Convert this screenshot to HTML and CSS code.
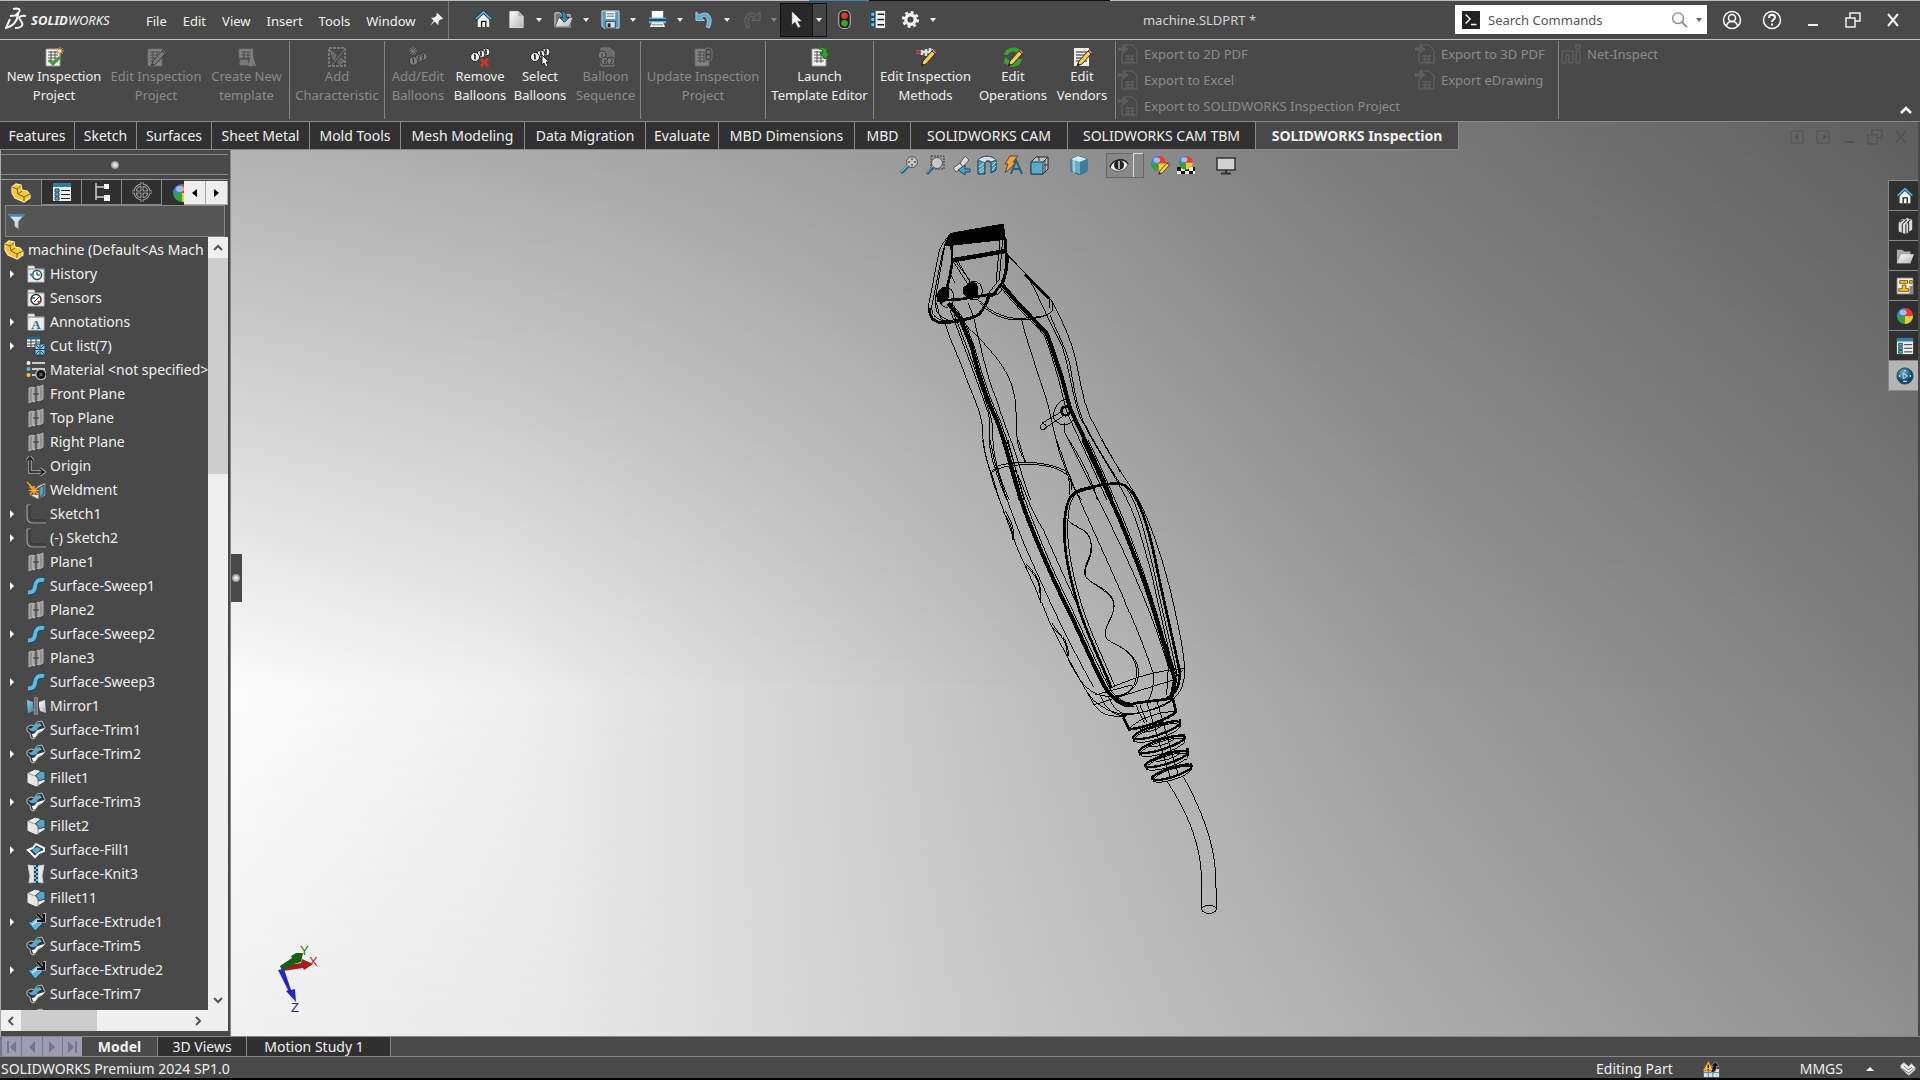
FILE: index.html
```html
<!DOCTYPE html>
<html lang="en">
<head>
<meta charset="utf-8">
<title>machine.SLDPRT</title>
<link rel="stylesheet" href="styles.css">
</head>
<body>
<svg class="sprite" aria-hidden="true">
<defs>
<linearGradient id="metal" x2="1" y2="1"><stop stop-color="#fff"/><stop offset="1" stop-color="#b4b4b4"/></linearGradient>
<linearGradient id="aqua" x2="1" y2="1"><stop stop-color="#9bd4ec"/><stop offset="1" stop-color="#2f7fa5"/></linearGradient>
<radialGradient id="ink" cx=".4" cy=".3"><stop stop-color="#6fb2d6"/><stop offset="1" stop-color="#12486c"/></radialGradient>
</defs>
<symbol id="home" viewBox="0 0 20 20"><path d="M4 9.500V18h12V9.500L10 4z" fill="#f4f4f4"/><path d="M8 18v-6h4.500v6" fill="none" stroke="#222" stroke-width="1.500"/><path d="M1 10.500 10 2l9 8.500" fill="none" stroke="#174a66" stroke-width="3.500"/><path d="M2 9.500 10 2l8 7.500" fill="none" stroke="#6db6d8" stroke-width="1.500"/></symbol>
<symbol id="doc" viewBox="0 0 20 20"><path d="M3 1.500h9l5 5v12H3z" fill="url(#metal)" stroke="#ddd"/><path d="M12 1.500v5h5" fill="#aaa"/></symbol>
<symbol id="open" viewBox="0 0 20 20"><path d="M1 3h5l2 2h9v13H1z" fill="#777" stroke="#ddd"/><path d="M5 8h15l-4 10H1z" fill="url(#metal)" stroke="#555"/><path d="M7 1c5 0 6 3 6 7h3l-5 5-5-5h3c0-3 0-5-2-7z" fill="#3e86ab" stroke="#123d55"/></symbol>
<symbol id="save" viewBox="0 0 20 20"><path d="M1 1h18v18H3l-2-2z" fill="#4e9dc4" stroke="#c9e0eb"/><path d="M5 1.500h10v8H5z" fill="#f4f4f4"/><path d="M6 4h8M6 6.500h8" stroke="#666"/><path d="M5 12h10v7H5z" fill="#ddd" stroke="#245"/><path d="M7 14h3v4H7z" fill="#222"/></symbol>
<symbol id="print" viewBox="0 0 20 20"><path d="M4 1h12v8H4z" fill="#fff"/><path d="M1 8h18v6H1z" fill="#62adcf"/><path d="M1 10.500h18" stroke="#174a66" stroke-width="2"/><path d="M4 13h12l2 5H2z" fill="#eee"/><path d="M4 15.500h12" stroke="#888"/></symbol>
<symbol id="undo" viewBox="0 0 20 20"><path d="M1 2v9h9L6.500 8C11 5 15 8 12 18l3 1C20 9 15-1 4.500 5z" fill="#5fabd0" stroke="#bfe2f2" stroke-width=".8"/></symbol>
<symbol id="redo" viewBox="0 0 20 20"><path d="M19 2v9h-9l3.500-3C9 5 5 8 8 18l-3 1C0 9 5-1 15.500 5z" fill="#505050" stroke="#6a6a6a"/></symbol>
<symbol id="cursor" viewBox="0 0 20 20"><path d="M5 1v15l3.500-3 3 6 3-1.500-3-5.500H16z" fill="#fff" stroke="#222" stroke-width=".7"/></symbol>
<symbol id="traffic" viewBox="0 0 20 20"><rect x="4" y=".5" width="12" height="19" rx="5" fill="#1d1d1d" stroke="#ccc"/><circle cx="10" cy="6" r="3.500" fill="#e23a22"/><circle cx="10" cy="14" r="3.500" fill="#3aa52e"/></symbol>
<symbol id="list" viewBox="0 0 20 20"><path d="M2 1h16v18H2z" fill="#f0f0f0"/><path d="M2 1h6v18H2z" fill="#1f4960"/><path d="M3.500 3h3v3h-3zM3.500 8.500h3v3h-3zM3.500 14h3v3h-3z" fill="#7ec0dd"/><path d="M10 4.500h7M10 10h7M10 15.500h7" stroke="#222" stroke-width="1.500"/></symbol>
<symbol id="gear" viewBox="0 0 20 20"><circle cx="10" cy="10" r="5" fill="none" stroke="#f5f5f5" stroke-width="3.500"/><circle cx="10" cy="10" r="7.500" fill="none" stroke="#f5f5f5" stroke-width="3" stroke-dasharray="2.950 2.940"/></symbol>
<symbol id="pin" viewBox="0 0 16 16"><path d="m9 1 6 6-2 1-1 0-2 3v3l-4-4-5 5 4-6-3-3h3l3-2V2z" fill="#f5f5f5"/></symbol>
<symbol id="search" viewBox="0 0 20 20"><circle cx="9" cy="8" r="6" fill="none" stroke="#888" stroke-width="1.500"/><path d="m13 12 6 6" stroke="#888" stroke-width="2"/></symbol>
<symbol id="user" viewBox="0 0 20 20"><g fill="none" stroke="#fff" stroke-width="1.500"><circle cx="10" cy="10" r="8.500"/><circle cx="10" cy="8" r="3.500"/><path d="M4.500 16c1-6 10-6 11 0"/></g></symbol>
<symbol id="help" viewBox="0 0 20 20"><circle cx="10" cy="10" r="8.500" fill="none" stroke="#fff" stroke-width="1.500"/><path d="M7 8c0-4.500 6-4 6-.5 0 2-3 2-3 4.500" fill="none" stroke="#fff" stroke-width="2"/><path d="M9 13.500h2v2H9z" fill="#fff"/></symbol>
<symbol id="sheet" viewBox="0 0 20 20"><path d="M2 2h14v17H2z" fill="#f4f4f4" stroke="#999"/><path d="M4 5h10M4 8h10M4 11h10M4 14h10M7 4v12M11 4v12" stroke="#555"/></symbol>
<symbol id="pencil" viewBox="0 0 20 20"><path d="m16 4 3 3-9 10-5 2 2-5z" fill="#f1cf57" stroke="#3a2b12"/><path d="m16 4 1.500-1.500 3 3L19 7z" fill="#d9827c" stroke="#633"/><path d="m5 19 1-3 2 2z" fill="#222"/></symbol>
<symbol id="newinsp" viewBox="0 0 20 20"><use href="#sheet"/><path d="m5 13 4 4 7-7" fill="none" stroke="#39a02a" stroke-width="3"/><path d="M16 0v8M12 4h8M13 1l6 6M19 1l-6 6" stroke="#f08c2a"/><circle cx="16" cy="4" r="1.500" fill="#fff"/></symbol>
<symbol id="editinsp" viewBox="0 0 20 20"><use href="#sheet"/><use href="#pencil"/></symbol>
<symbol id="template" viewBox="0 0 20 20"><use href="#sheet"/><path d="M2 12h10v7H2z" fill="#ccc" stroke="#222"/><path d="m12 19 3-9 3 9m-5-3h4" fill="none" stroke="#ddd" stroke-width="2"/></symbol>
<symbol id="addchar" viewBox="0 0 20 20"><path d="M2 1h16v18H2z" fill="none" stroke="#ccc" stroke-width="2" stroke-dasharray="3 1"/><path d="m3 3 6 5-2 5zM17 3 5 18m6-3 3-4 3 3-4 4z" fill="#999" stroke="#ccc"/></symbol>
<symbol id="balloons" viewBox="0 0 20 20"><g fill="#eee" stroke="#222"><circle cx="16" cy="5" r="4"/><circle cx="11" cy="7" r="4"/><circle cx="5" cy="10" r="4.500"/></g><path d="M5 7.500v5M4 8.500l1-1M11 4.500v5M10 5.500l1-1M16 2.500v5M15 3.500l1-1" stroke="#111" stroke-width="1.500"/></symbol>
<symbol id="balrem" viewBox="0 0 20 20"><use href="#balloons"/><path d="m11 12 7 7m0-7-7 7" stroke="#d5311d" stroke-width="3"/></symbol>
<symbol id="balsel" viewBox="0 0 20 20"><use href="#balloons"/><path d="M12 8v10l2-2 2 4 2-1-2-4h3z" fill="#fff" stroke="#222"/></symbol>
<symbol id="baladd" viewBox="0 0 20 20"><g transform="translate(1 5) scale(.9)"><use href="#balloons" width="20" height="20"/></g><path d="M5 0v8M1 4h8M2 1l6 6M8 1 2 7" stroke="#ddd"/></symbol>
<symbol id="balseq" viewBox="0 0 20 20"><path d="M5 1h9l4 4v14H5z" fill="#aaa" stroke="#ddd"/><g fill="#ddd" stroke="#222"><circle cx="6" cy="8" r="4"/><circle cx="9" cy="14" r="4"/><circle cx="15" cy="14" r="4"/></g><path d="M6 6v4M8 13h2l-2 3h2M14 12h2v4h-2" fill="none" stroke="#111"/></symbol>
<symbol id="update" viewBox="0 0 20 20"><use href="#sheet"/><rect x="12" y="1" width="7" height="13" rx="3" fill="#333" stroke="#ccc"/><circle cx="15.500" cy="5" r="2" fill="#bbb"/><circle cx="15.500" cy="10" r="2" fill="#bbb"/></symbol>
<symbol id="launch" viewBox="0 0 20 20"><use href="#sheet"/><path d="M9 0c6 0 8 2 8 6h3l-5 6-5-6h3c0-3-1-4-4-4z" fill="#35a22c" stroke="#176012"/></symbol>
<symbol id="methods" viewBox="0 0 20 20"><path d="M0 5h20M6 8V3m4 6V2m4 7V1m3 7V2" stroke="#ddd" stroke-width="2.500"/><path d="M0 5h5" stroke="#d22" stroke-width="2"/><use href="#pencil"/></symbol>
<symbol id="ops" viewBox="0 0 20 20"><path d="M3 8C4 2 14 0 17 7M17 12C15 19 6 20 3 13" fill="none" stroke="#38a62e" stroke-width="4"/><path d="m1 17 1-7 5 4z" fill="#38a62e"/><use href="#pencil"/></symbol>
<symbol id="vendors" viewBox="0 0 20 20"><path d="M2 1h15v18H2z" fill="#f0f0f0"/><path d="M4 5h11M4 8h11M4 11h11M4 14h11" stroke="#222"/><use href="#pencil"/></symbol>
<symbol id="export" viewBox="0 0 20 20"><path d="M5 1h9l5 5v13H4V9" fill="#444" stroke="#999"/><path d="M0 4h5V1l5 4-5 4V6H0z" fill="#777" stroke="#aaa" stroke-width=".7"/><path d="M7 12h9M7 15h9M7 18h9M10 11v7M14 11v7" stroke="#999"/></symbol>
<symbol id="ni" viewBox="0 0 20 20"><path d="M1 19V7h11v12H8v-8H5v8zM15 7h4v12h-4zM15 1h4v4h-4z" fill="#505050" stroke="#999"/></symbol>
<symbol id="zoomfit" viewBox="0 0 20 20"><circle cx="13" cy="7" r="5.500" fill="#c4c4c4" stroke="#555"/><path d="M13 3v8M9 7h8" stroke="#222" stroke-dasharray="2 4"/><path d="m9 11-7 7" stroke="#265f7d" stroke-width="3.500"/><path d="m9 10-7 7" stroke="#80bdd8" stroke-width="1.500"/></symbol>
<symbol id="zoomarea" viewBox="0 0 20 20"><path d="M6 1h13v13H6z" fill="none" stroke="#333" stroke-dasharray="2 1"/><circle cx="12" cy="8" r="5.500" fill="#c7c7c7" stroke="#555"/><path d="m8 12-6 7" stroke="#265f7d" stroke-width="3"/><path d="m8 11-6 7" stroke="#80bdd8"/></symbol>
<symbol id="prev" viewBox="0 0 20 20"><path d="M2 13 9 8l5-7 4 4-6 7-7 5z" fill="#ddd" stroke="#555"/><path d="m9 8 3 4" stroke="#444"/><path d="M19 14h-5v-4l-7 5 7 5v-3h5z" fill="#4da2ca" stroke="#245"/></symbol>
<symbol id="section" viewBox="0 0 20 20"><path d="M1 5c4-5 14-5 18 0v10l-5 3V8c-2-2-5-2-6 0v11H1z" fill="#4d9ec3" stroke="#17384a"/><path d="M1 5c4-5 14-5 18 0l-5 2c-2-2-5-2-6 1z" fill="#d5dfe3" stroke="#456"/><path d="m2 12 5-4m-5 8 5-4m-4 6 4-3m8-4 4-4m-4 8 4-4" stroke="#b7e2f3"/></symbol>
<symbol id="dyn" viewBox="0 0 20 20"><path d="M7 1h8l-5 6h4L2 18l3-9H2z" fill="#f2a43a" stroke="#754010"/><path d="m8 19 5-14 6 14m-9-5h7" fill="none" stroke="#27617d" stroke-width="2"/></symbol>
<symbol id="viewcube" viewBox="0 0 20 20"><path d="M2 7 7 2h12v12l-5 5H2z" fill="#c0c0c0" stroke="#222"/><path d="M2 7h12v12H2z" fill="#5aaace" stroke="#16455e"/><path d="m14 7 5-5M10 2v4M15 10h4M16 5v12" stroke="#333"/></symbol>
<symbol id="cube" viewBox="0 0 20 20"><path d="m2 4 7-3 9 3v12l-7 4-9-4z" fill="#65aeca" stroke="#35596a"/><path d="m2 4 9 3 7-3-9-3z" fill="#d7eaf1"/><path d="M11 7v13l7-4V4z" fill="#397c9e"/><path d="m5 5 0 13" stroke="#d7eaf1"/></symbol>
<symbol id="eye" viewBox="0 0 20 20"><path d="M1 12c3-8 14-10 18-3-2 8-14 10-18 3z" fill="#eee" stroke="#555"/><path d="M1 12C4 4 15 2 19 9" fill="none" stroke="#222" stroke-width="1.500"/><circle cx="10" cy="10" r="5" fill="#222"/><path d="M10 6v8" stroke="#ddd" stroke-width="1.500"/></symbol>
<symbol id="sphere" viewBox="0 0 20 20"><path d="M10 10V1a9 9 0 0 0-9 9z" fill="#3f7fe0"/><path d="M10 10h9a9 9 0 0 0-9-9z" fill="#e23e38"/><path d="M10 10v9a9 9 0 0 0 9-9z" fill="#f4c733"/><path d="M10 10H1a9 9 0 0 0 9 9z" fill="#31a144"/><ellipse cx="8" cy="6" rx="4" ry="3" fill="#fff" opacity=".5"/></symbol>
<symbol id="appear" viewBox="0 0 20 20"><g transform="scale(.85)"><use href="#sphere" width="20" height="20"/></g><g transform="translate(5 5) scale(.75)"><use href="#pencil" width="20" height="20"/></g></symbol>
<symbol id="scene" viewBox="0 0 20 20"><path d="M1 12h18v7H1z" fill="#eee"/><path d="M1 12h4v4H1zm8 0h4v4H9zm8 0h2v4h-2zm-12 4h4v3H5zm8 0h4v3h-4z" fill="#111"/><g transform="translate(2 0) scale(.78)"><use href="#sphere" width="20" height="20"/></g></symbol>
<symbol id="monitor" viewBox="0 0 20 20"><path d="M1 3h18v12H1z" fill="#d0d0d0" stroke="#333" stroke-width="1.500"/><path d="M10 15v3M5 18.500h10" stroke="#333" stroke-width="2"/></symbol>
<symbol id="part" viewBox="0 0 20 20"><path d="m1 4 4-3 5 1 1 5 5 1 3 4v3l-6 4-9-4-3-5z" fill="#f5c92e" stroke="#f9edb5" stroke-width="1.200"/><path d="m1 4 5 2 1 5 6 3 6-3M13 14v4M6 6l4-3M7 11l4-3" fill="none" stroke="#825d08"/></symbol>
<symbol id="folder" viewBox="0 0 20 20"><path d="M2 2h6l1 3h9v13H2z" fill="#eee" stroke="#bbb"/><path d="M2 5h16" stroke="#888"/></symbol>
<symbol id="history" viewBox="0 0 20 20"><use href="#folder"/><circle cx="11" cy="11" r="4.500" fill="#fff" stroke="#27526b" stroke-width="1.500"/><path d="M11 8v3h3" fill="none" stroke="#222"/><path d="m3 10 4 4 1-5z" fill="#3b86ac"/></symbol>
<symbol id="sensors" viewBox="0 0 20 20"><use href="#folder"/><circle cx="10" cy="11.500" r="5" fill="#fff" stroke="#333" stroke-width="1.500"/><path d="m8 14 5-5" stroke="#222"/><path d="M11 13h4l-2 3z" fill="#d33"/><path d="M6 9h3v2H6z" fill="#48a"/></symbol>
<symbol id="cutlist" viewBox="0 0 20 20"><path d="M1 1h13v10H1z" fill="#f5f5f5"/><path d="M1 2h13" stroke="#266487" stroke-width="3"/><path d="M1 6h13M1 9h13M5 3v8M10 3v8" stroke="#444"/><path d="M9 8h10v11H9z" fill="#8cc9e2" stroke="#134259"/><path d="m10 9 3 3m5-3-3 3m-5 6 3-3m5 3-3-3M9 13.500h10M14 8v11" stroke="#134259"/></symbol>
<symbol id="material" viewBox="0 0 20 20"><circle cx="2.500" cy="3" r="2" fill="#eee"/><circle cx="2.500" cy="9" r="2" fill="#67b2d3"/><circle cx="2.500" cy="15" r="2" fill="#f2c62a"/><path d="M6 3h13M6 9h13M6 15h6" stroke="#ccc" stroke-width="2"/><circle cx="15" cy="14.500" r="3.500" fill="none" stroke="#bbb" stroke-width="4.500"/><circle cx="15" cy="14.500" r="3" fill="none" stroke="#151515" stroke-width="3"/></symbol>
<symbol id="plane" viewBox="0 0 20 20"><path d="m3 4 4-1v14l-4 2zM13 3l4-2v14l-4 2zM7 4l6-2v14l-6 2z" fill="#909090" stroke="#b5b5b5"/><path d="M10 1v18M7 10h6" stroke="#333"/></symbol>
<symbol id="origin" viewBox="0 0 20 20"><path d="M4 3v13h13M1 5l3-4 3 4m7 8 4 3-4 3" fill="none" stroke="#aaa" stroke-width="3.500"/><path d="M4 3v13h13M1 5l3-4 3 4m7 8 4 3-4 3" fill="none" stroke="#1a1a1a" stroke-width="1.500"/></symbol>
<symbol id="weldment" viewBox="0 0 20 20"><path d="m3 5 7 2 9-4v12l-7 4-8-4z" fill="#e7e7e7" stroke="#777"/><path d="m13 8 5-3v9l-5 4z" fill="#4e9fc5" stroke="#245"/><path d="M1 2 7 8M4 7l8 7m0-7-8 7m4-8v9M3 10.500h10" stroke="#5a3508" stroke-width="3"/><path d="M1 2 7 8M4 7l8 7m0-7-8 7m4-8v9M3 10.500h10" stroke="#f0a83b" stroke-width="1.500"/></symbol>
<symbol id="sketch" viewBox="0 0 20 20"><path d="M5 1H1v12q0 6 6 6h13" fill="none" stroke="#999" stroke-width="1.200"/><path d="M4 1v11q0 4 4 4h12" fill="none" stroke="#333"/></symbol>
<symbol id="sweep" viewBox="0 0 20 20"><path d="M2 17c10 0 5-8 9-11 2-2 5-2 7-1" fill="none" stroke="#174d68" stroke-width="6.500"/><path d="M2 16.500c10 0 5-8 9-11 2-2 5-2 7-1" fill="none" stroke="#62b7df" stroke-width="4"/></symbol>
<symbol id="mirror" viewBox="0 0 20 20"><path d="m1 4 6 2v4l1 5-6 2z" fill="url(#aqua)"/><path d="m19 4-6 2v4l1 5 6 2z" fill="url(#metal)"/><path d="M10 1v18" stroke="#ccc" stroke-width="3"/><path d="M10 1v18" stroke="#222"/></symbol>
<symbol id="trim" viewBox="0 0 20 20"><path d="m1 7 4-2 3 1 3-4 5-1 3 7-4 4-3 1-4 6-3-1-1-5-3-2z" fill="#26343c" stroke="#bbb"/><path d="M2 8c5 2 5-3 8-4l4-1 2 3c-5 0-4 5-8 5-3 1-4-1-6-3z" fill="#5ca9cc"/><path d="M6 14c4 0 3-3 6-4l6-2c-1 4-5 3-6 5-2 4-3 4-5 5z" fill="#fff"/></symbol>
<symbol id="fillet" viewBox="0 0 20 20"><path d="m1 5 8-4 10 3v10l-9 5-9-4z" fill="#e8e8e8" stroke="#444"/><path d="m9 8 6-5 4 1v7l-7 2q1-4-3-5z" fill="#55a7ca" stroke="#19435a"/><path d="m1 5 8 3q3 2 3 5v6" fill="none" stroke="#999"/></symbol>
<symbol id="fill" viewBox="0 0 20 20"><path d="m2 10 5-2 3-4 8 4 0 3-5 2-4 4z" fill="#17475f" stroke="#fff" stroke-width="2"/><path d="m6 10 5-3 4 2-5 5z" fill="#5cacd0"/></symbol>
<symbol id="knit" viewBox="0 0 20 20"><path d="m2 1 6 1v16l-5 1 1-7zM18 1l-6 1v16l5 1-1-7z" fill="#e7e7e7" stroke="#ccc"/><path d="M10 1v18" stroke="#14445c" stroke-width="4"/><path d="M9 1v18M11 3v16" stroke="#77bcda" stroke-width="2" stroke-dasharray="2 2"/></symbol>
<symbol id="extrude" viewBox="0 0 20 20"><path d="m1 9 4 1 6-5 6 7c-3 1-4 4-8 7z" fill="#63b5da" stroke="#174258"/><path d="m6 13 7-6" stroke="#bbe6f7" stroke-width="2"/><path d="m11 2 7 7M19 1v8h-8" fill="none" stroke="#bbb" stroke-width="3"/><path d="m11 2 7 7M18 2v7h-7" fill="none" stroke="#111" stroke-width="2"/></symbol>
<symbol id="tree" viewBox="0 0 20 20"><path d="M4 1v17M4 5h8M4 15h8" fill="none" stroke="#ccc" stroke-width="1.500"/><path d="M12 2h5v5h-5zM12 13h6v6h-6z" fill="#f5f5f5"/></symbol>
<symbol id="target" viewBox="0 0 20 20"><g fill="none" stroke="#aaa" stroke-width="3"><circle cx="10" cy="10" r="7"/><path d="M10 0v20M0 10h20"/></g><g fill="none" stroke="#111"><circle cx="10" cy="10" r="7"/><path d="M10 0v20M0 10h20"/></g></symbol>
<symbol id="props" viewBox="0 0 20 20"><path d="M1 2h18v17H1z" fill="#f0f0f0"/><path d="M1 3h18" stroke="#347da2" stroke-width="4"/><path d="M3 7h4v3H3zm0 4h4v3H3zm0 4h4v3H3z" fill="#68b0d0" stroke="#164359"/><path d="M9 8.500h9M9 12.500h9M9 16.500h9" stroke="#222"/></symbol>
<symbol id="funnel" viewBox="0 0 20 20"><path d="M1 2h18l-7 8v8l-4-3v-5z" fill="url(#metal)"/><path d="M1 2h18l-2 3H3z" fill="#3c8eb6"/></symbol>
<symbol id="library" viewBox="0 0 20 20"><path d="m3 6 4-4 3 1 2-2 6 2v11l-7 5-3-1-5-2z" fill="#ddd"/><path d="M7 7v11M11 8v11M14 6v11M4 6l4-3M8 7l4-4M12 7l4-4" stroke="#333" stroke-width="1.200"/></symbol>
<symbol id="folder2" viewBox="0 0 20 20"><path d="M1 3h6l2 2h7v13H1z" fill="#aaa"/><path d="M6 8h14l-4 10H1z" fill="url(#metal)"/></symbol>
<symbol id="palette" viewBox="0 0 20 20"><path d="M1 1h18v18H1z" fill="#eee" stroke="#666"/><path d="M4 4h9v3H4zm11 0h3v3h-3zM7 9h4v4h3v3H3v-3h4z" fill="#f4c22b" stroke="#7c5800"/><path d="M15 10h4v9h-4z" fill="#888"/></symbol>
<symbol id="forum" viewBox="0 0 20 20"><circle cx="10" cy="10" r="9" fill="url(#ink)" stroke="#174562"/><path d="m8 7 5 3-5 3z" fill="none" stroke="#cfe4ef"/><path d="M4 9v2M16 9v2M8 16h4M9 4h2" stroke="#cfe4ef" stroke-width="1.500"/></symbol>
<symbol id="warn" viewBox="0 0 20 20"><path d="M2 10h17v9H2z" fill="#ddd"/><path d="M2 14h17M7 10v9M12 10v9" stroke="#357a9e"/><path d="m7 1 6 11H1z" fill="#f7bd2b" stroke="#a65e00"/><path d="M7 5v4M7 10v1" stroke="#111" stroke-width="1.500"/><path d="M10 14c6 0 6-4 6-7h3l-4-5-5 5h3" fill="#111" stroke="#ccc" stroke-width=".6"/></symbol>
<symbol id="tag" viewBox="0 0 20 20"><path d="m1 5 4-3 6 5 3-4 5 5v3l-8 7L1 9z" fill="#eee" stroke="#999"/><path d="m5 6 5 5 5-3M2 9l9 6 7-6" fill="none" stroke="#555"/></symbol>
<symbol id="restore" viewBox="0 0 16 16"><path d="M5 6V1h10v8h-5M1 6h9v9H1z" fill="none" stroke="currentColor" stroke-width="1.500"/></symbol>
<symbol id="cross" viewBox="0 0 16 16"><path d="m3 2 10 12M13 2 3 14" stroke="currentColor" stroke-width="2"/></symbol>
<symbol id="dash" viewBox="0 0 16 16"><path d="M3 13h10" stroke="currentColor" stroke-width="2"/></symbol>
<symbol id="paneL" viewBox="0 0 16 16"><path d="M2 2h12v12H2z" fill="none" stroke="currentColor"/><path d="m9 5-4 3 4 3z" fill="currentColor"/></symbol>
<symbol id="paneR" viewBox="0 0 16 16"><path d="M2 2h12v12H2z" fill="none" stroke="currentColor"/><path d="m8 5 4 3-4 3z" fill="currentColor"/></symbol>
</svg>

<header class="titlebar">
  <div class="brand">
    <svg class="ds" viewBox="0 0 22 26"><path d="M8 2c5-1 8 0 6 3L10 9M5 9l8-1c-1 6-4 11-12 13l4-9M21 9c-7-1-8 2-5 5 3 4 1 7-6 7" fill="none" stroke="#f5f5f5" stroke-width="2"/></svg>
    <span><b>SOLID</b>WORKS</span>
  </div>
  <nav class="menu"><a href="#f">File</a><a href="#e">Edit</a><a href="#v">View</a><a href="#i">Insert</a><a href="#t">Tools</a><a href="#w">Window</a></nav>
  <svg class="pinicon"><use href="#pin"/></svg>
  <div class="quick">
    <button class="q" aria-label="Home"><svg><use href="#home"/></svg></button>
    <button class="q drop" aria-label="New"><svg><use href="#doc"/></svg></button>
    <button class="q drop" aria-label="Open"><svg><use href="#open"/></svg></button>
    <button class="q drop" aria-label="Save"><svg><use href="#save"/></svg></button>
    <button class="q drop" aria-label="Print"><svg><use href="#print"/></svg></button>
    <button class="q drop" aria-label="Undo"><svg><use href="#undo"/></svg></button>
    <button class="q drop off" aria-label="Redo"><svg><use href="#redo"/></svg></button>
    <button class="q drop chosen" aria-label="Select"><svg><use href="#cursor"/></svg></button>
    <button class="q" aria-label="Rebuild"><svg><use href="#traffic"/></svg></button>
    <button class="q" aria-label="File properties"><svg><use href="#list"/></svg></button>
    <button class="q drop" aria-label="Options"><svg><use href="#gear"/></svg></button>
  </div>
  <div class="doctitle">machine.SLDPRT *</div>
  <div class="search">
    <svg class="term" viewBox="0 0 20 20"><path d="M0 0h20v20H0z" fill="#222"/><path d="m4 4 5 5-5 5M10 15h6" fill="none" stroke="#fff" stroke-width="1.500"/></svg>
    <input type="text" placeholder="Search Commands" aria-label="Search Commands">
    <svg class="i18"><use href="#search"/></svg><i class="caret dark"></i>
  </div>
  <div class="winctl">
    <button aria-label="Account"><svg><use href="#user"/></svg></button>
    <button aria-label="Help"><svg><use href="#help"/></svg></button>
    <button aria-label="Minimize"><svg class="i16"><use href="#dash"/></svg></button>
    <button aria-label="Restore"><svg class="i16"><use href="#restore"/></svg></button>
    <button aria-label="Close"><svg class="i16"><use href="#cross"/></svg></button>
  </div>
</header>

<section class="ribbon">
  <div class="group g3a">
    <button><svg><use href="#newinsp"/></svg>New Inspection<br>Project</button>
    <button disabled><svg><use href="#editinsp"/></svg>Edit Inspection<br>Project</button>
    <button disabled><svg><use href="#template"/></svg>Create New<br>template</button>
  </div>
  <div class="group g1a"><button disabled><svg><use href="#addchar"/></svg>Add<br>Characteristic</button></div>
  <div class="group g4">
    <button disabled><svg><use href="#baladd"/></svg>Add/Edit<br>Balloons</button>
    <button><svg><use href="#balrem"/></svg>Remove<br>Balloons</button>
    <button><svg><use href="#balsel"/></svg>Select<br>Balloons</button>
    <button disabled><svg><use href="#balseq"/></svg>Balloon<br>Sequence</button>
  </div>
  <div class="group g1b"><button disabled><svg><use href="#update"/></svg>Update Inspection<br>Project</button></div>
  <div class="group g1c"><button><svg><use href="#launch"/></svg>Launch<br>Template Editor</button></div>
  <div class="group g3b">
    <button><svg><use href="#methods"/></svg>Edit Inspection<br>Methods</button>
    <button><svg><use href="#ops"/></svg>Edit<br>Operations</button>
    <button><svg><use href="#vendors"/></svg>Edit<br>Vendors</button>
  </div>
  <div class="group exports">
    <div>
      <button disabled><svg><use href="#export"/></svg>Export to 2D PDF</button>
      <button disabled><svg><use href="#export"/></svg>Export to Excel</button>
      <button disabled><svg><use href="#export"/></svg>Export to SOLIDWORKS Inspection Project</button>
    </div>
    <div>
      <button disabled><svg><use href="#export"/></svg>Export to 3D PDF</button>
      <button disabled><svg><use href="#export"/></svg>Export eDrawing</button>
    </div>
  </div>
  <div class="exports last"><div><button disabled><svg><use href="#ni"/></svg>Net-Inspect</button></div></div>
  <button class="fold" aria-label="Collapse ribbon"><svg viewBox="0 0 12 8"><path d="m1 7 5-5 5 5" fill="none" stroke="#fff" stroke-width="2.500"/></svg></button>
</section>

<nav class="tabs">
  <button>Features</button><button>Sketch</button><button>Surfaces</button><button>Sheet Metal</button><button>Mold Tools</button><button>Mesh Modeling</button><button>Data Migration</button><button>Evaluate</button><button>MBD Dimensions</button><button>MBD</button><button>SOLIDWORKS CAM</button><button>SOLIDWORKS CAM TBM</button><button class="on">SOLIDWORKS Inspection</button>
</nav>

<main class="work">
  <aside class="panel">
    <div class="grip"><i class="knob"></i></div>
    <div class="ptabs">
      <button class="on" aria-label="Feature tree"><svg><use href="#part"/></svg></button>
      <button aria-label="Properties"><svg><use href="#props"/></svg></button>
      <button aria-label="Configurations"><svg><use href="#tree"/></svg></button>
      <button aria-label="Dimensions"><svg><use href="#target"/></svg></button>
      <button class="cut" aria-label="Display"><svg><use href="#sphere"/></svg></button>
      <button class="arrow" aria-label="Previous"><i class="left"></i></button>
      <button class="arrow" aria-label="Next"><i class="right"></i></button>
    </div>
    <div class="filter"><svg><use href="#funnel"/></svg><input type="text" aria-label="Filter"></div>
    <div class="treebox">
      <ul class="tree">
        <li class="root"><svg><use href="#part"/></svg>machine (Default&lt;As Mach</li>
        <li class="x"><svg><use href="#history"/></svg>History</li>
        <li><svg><use href="#sensors"/></svg>Sensors</li>
        <li class="x"><svg viewBox="0 0 20 20"><use href="#folder"/><text x="10" y="17" text-anchor="middle" class="glyph">A</text></svg>Annotations</li>
        <li class="x"><svg><use href="#cutlist"/></svg>Cut list(7)</li>
        <li><svg><use href="#material"/></svg>Material &lt;not specified&gt;</li>
        <li><svg><use href="#plane"/></svg>Front Plane</li>
        <li><svg><use href="#plane"/></svg>Top Plane</li>
        <li><svg><use href="#plane"/></svg>Right Plane</li>
        <li><svg><use href="#origin"/></svg>Origin</li>
        <li><svg><use href="#weldment"/></svg>Weldment</li>
        <li class="x"><svg><use href="#sketch"/></svg>Sketch1</li>
        <li class="x"><svg><use href="#sketch"/></svg>(-) Sketch2</li>
        <li><svg><use href="#plane"/></svg>Plane1</li>
        <li class="x"><svg><use href="#sweep"/></svg>Surface-Sweep1</li>
        <li><svg><use href="#plane"/></svg>Plane2</li>
        <li class="x"><svg><use href="#sweep"/></svg>Surface-Sweep2</li>
        <li><svg><use href="#plane"/></svg>Plane3</li>
        <li class="x"><svg><use href="#sweep"/></svg>Surface-Sweep3</li>
        <li><svg><use href="#mirror"/></svg>Mirror1</li>
        <li><svg><use href="#trim"/></svg>Surface-Trim1</li>
        <li class="x"><svg><use href="#trim"/></svg>Surface-Trim2</li>
        <li><svg><use href="#fillet"/></svg>Fillet1</li>
        <li class="x"><svg><use href="#trim"/></svg>Surface-Trim3</li>
        <li><svg><use href="#fillet"/></svg>Fillet2</li>
        <li class="x"><svg><use href="#fill"/></svg>Surface-Fill1</li>
        <li><svg><use href="#knit"/></svg>Surface-Knit3</li>
        <li><svg><use href="#fillet"/></svg>Fillet11</li>
        <li class="x"><svg><use href="#extrude"/></svg>Surface-Extrude1</li>
        <li><svg><use href="#trim"/></svg>Surface-Trim5</li>
        <li class="x"><svg><use href="#extrude"/></svg>Surface-Extrude2</li>
        <li><svg><use href="#trim"/></svg>Surface-Trim7</li>
        <li><svg><use href="#trim"/></svg></li>
      </ul>
      <div class="vbar">
        <button aria-label="Scroll up"><svg viewBox="0 0 10 10"><path d="m1 7 4-4 4 4"/></svg></button>
        <i class="thumb"></i>
        <button aria-label="Scroll down"><svg viewBox="0 0 10 10"><path d="m1 3 4 4 4-4"/></svg></button>
      </div>
    </div>
    <div class="hbar">
      <button aria-label="Scroll left"><svg viewBox="0 0 10 10"><path d="M7 1 3 5l4 4"/></svg></button>
      <i class="thumb"></i>
      <button aria-label="Scroll right"><svg viewBox="0 0 10 10"><path d="m3 1 4 4-4 4"/></svg></button>
    </div>
  </aside>

  <section class="view">
    <svg class="scene" viewBox="231 122 1687 914" preserveAspectRatio="xMinYMin meet">
      <g class="wire" transform="translate(900 200) scale(.33333)">
        <path class="solid" d="M152 100 310 72l6 46-181 20zM160 175l158-27v10l-158 28zM108 285l20-24 16 2 2 30-24 18zM192 262l20-16 18 4 4 34-30 10-12-12z"/>
        <path class="thick" d="M155 138l2 48-7 40-10 40M110 302l70-4 110-18M316 118l2 37c4 35 2 65-13 95l-30 40M375 225l70 70"/>
        <path d="M152 100C135 120 122 140 118 150L85 320c0 30 10 45 35 50 40 0 90-10 120-25 20-25 30-55 35-67M145 108l-17 47-33 165c0 25 10 35 35 42 50-2 90-10 105-22 20-20 25-42 28-58M135 132l-30 170c0 30 10 50 45 60M300 118l-12 132M308 118l-10 120-35 45M318 155l7 10c0 35-5 60-17 93-3 17-13 27-28 28M160 185l45 70M165 182l45 60M175 185l60 105M150 220l15 30"/>
        <path class="thick" d="M88 325c0 27 12 40 35 43 40 0 85-8 115-25 18-22 28-48 34-64"/>
        <ellipse cx="222" cy="272" rx="25" ry="28"/><ellipse cx="140" cy="292" rx="22" ry="30"/><circle cx="215" cy="268" r="18"/>
        <path d="M318 158l62 67 65 65c15 15 17 30 10 45-15 15-55 23-95 25-50 0-85-15-120-50M325 168l110 110c15 18 18 30 12 45M235 300c35 35 75 52 110 55 45 0 75-5 100-10"/>
        <path d="M380 225l25 45 35 75c20 45 40 75 50 105 20 70 30 150 50 200 40 80 80 140 120 200M450 345c25 60 48 100 60 150 10 60 20 120 38 165 35 70 80 140 112 190M455 300c25 50 55 110 70 170 15 70 25 130 45 180 30 60 60 110 90 165"/>
        <path class="seam" d="M308 255l37 45 95 100c20 50 30 90 45 130l25 95c30 65 80 165 125 275M145 310l35 45 35 85c20 80 45 160 75 220 30 80 50 160 72 240"/>
        <path d="M300 260l40 48 92 96c22 55 30 90 43 130l25 100c30 70 78 165 120 266M155 310l35 45 33 85c22 80 47 160 77 220 30 80 50 160 72 240"/>
        <path d="M135 370c15 50 45 110 60 155 20 55 50 115 52 155 0 50 13 110 28 140l23 80M110 310l8 35 17 27M150 330c40 100 80 210 115 310 10 40 0 80 5 105 10 55 30 105 50 155M163 345c40 100 80 210 108 300 12 40 4 80 12 115 10 55 25 95 45 140"/>
        <path d="M185 360c55 60 125 120 150 195 20 55 10 125 17 165 5 30 13 50 26 65M205 310l15 40c25 100 40 180 70 250 15 50 30 90 50 140 20 60 35 120 52 160M365 358c15 72 65 202 80 262 15 60 25 120 45 170 10 30 20 60 55 110M493 670c-3 30 7 40 27 70 30 50 60 110 72 160"/>
        <path d="M500 598c-30 0-45 42-38 58 15 28 53 22 63-6M425 670l65-38M432 687l63-42"/><circle cx="430" cy="680" r="9"/><circle class="thick" cx="497" cy="633" r="13"/>
      </g>
      <g class="wire" transform="translate(960 440) scale(.33333)">
        <path d="M68 0c7 50 22 90 32 130 30 80 60 160 70 190 30 70 70 150 100 230 40 80 90 170 130 240 20 35 50 42 100 38M90 0l15 70c35 110 65 190 95 260 50 110 100 230 200 410"/>
        <path d="M95 110c-3-25 15-35 55-40 50-12 140 5 170 25 15 10 17 35 13 55M98 95c17-13 52-17 52-17 80-13 150 2 175 32 5 20 3 40 3 55"/>
        <path d="M130 215c10 20 30 40 28 85M195 375c20 25 50 35 45 115M270 550c20 40 50 30 52 100l8 20c30 50 50 100 130 100 40-2 80-25 75-80-5-40-35-60-65-75-30-15-40-25-33-45 8-30 28-50 25-80-7-40-52-50-82-75-15-15 0-45 10-70 8-35 2-60-20-75-30-15-40-20-50-35"/>
        <path d="M136 213c10 20 28 45 26 87M200 373c22 27 46 40 42 115M275 548c22 40 50 42 50 100M322 237c10 13 22 20 50 35 22 18 25 38 20 75-10 25-24 50-13 67 30 28 72 40 82 75 5 30-15 55-24 80-5 22 4 33 33 46 30 14 58 38 60 80 0 50-30 75-75 73"/>
        <path class="seam" d="M132 0c13 50 28 110 48 170 30 90 90 230 140 330 50 100 80 180 120 250 30 40 60 50 80 45M370 0c30 60 70 150 110 240 50 120 100 260 125 350l40 130-10 50"/>
        <path d="M144 0c13 50 28 110 48 170 30 90 90 230 140 330 50 100 80 180 120 250 25 35 50 40 70 40M384 0c30 60 65 140 105 235 50 120 95 260 120 350l42 125M165 90c25 40 35 100 85 180 40 90 80 180 100 220l45 110M175 0l20 65"/>
        <path class="thick" d="M455 745c-35-85-75-165-100-245-30-100-55-210-35-300 10-40 25-50 80-60 50-10 80-15 100 0 40 30 70 140 90 240 20 100 50 220 70 320-3 40-10 60-40 75M520 790l120-15"/>
        <path d="M465 740c-35-85-75-165-100-245-30-100-55-210-35-300 10-35 25-42 75-50M480 140c50 80 70 180 92 250 20 90 50 220 72 320M500 145c40 60 60 160 80 240 20 100 50 220 72 320M475 780c20 15 40 20 50 10"/>
        <path d="M425 0c45 80 75 120 105 170 50 90 90 230 110 320 20 90 32 150 34 200 1 40-14 70-34 85M400 0c30 60 60 100 80 140M325 0l65 130c60 120 170 330 235 550l-5 85M290 0l35 100c75 180 195 420 255 600 2 40-5 70-20 85"/>
        <path d="M460 740c70-30 140-50 215-55M400 795l240-75 30-30M385 760c15 30 65 60 115 65 50-5 110-25 140-50M405 765l110-30M420 765c20 50 50 65 80 62M445 770c15 35 30 48 60 55"/>
      </g>
      <g class="wire" transform="translate(1080 640) scale(.33333)">
        <path class="thick" d="M130 232l18 36c35-3 120-30 140-53l-10-40"/>
        <path d="M135 220c30 5 110-10 150-45M180 195l20 50M200 185l70 225M230 180l65 225M165 190l28 58M150 266c20-30 100-55 135-50"/>
        <g class="coil"><ellipse cx="229" cy="271" rx="74" ry="15" transform="rotate(-18 229 271)"/><ellipse cx="246" cy="313" rx="72" ry="15" transform="rotate(-18 246 313)"/><ellipse cx="260" cy="357" rx="67" ry="14" transform="rotate(-18 260 357)"/><ellipse cx="276" cy="397" rx="62" ry="14" transform="rotate(-18 276 397)"/></g>
        <path class="coil" d="M158 288l6 18M300 238v24M176 330l6 16M312 282v22M196 370l6 18M323 325v22M217 406l6 20M334 368v18"/>
        <g><ellipse cx="231" cy="279" rx="72" ry="18" transform="rotate(-18 231 279)"/><ellipse cx="248" cy="322" rx="70" ry="18" transform="rotate(-18 248 322)"/><ellipse cx="262" cy="365" rx="65" ry="17" transform="rotate(-18 262 365)"/><ellipse cx="278" cy="403" rx="60" ry="16" transform="rotate(-18 278 403)"/><ellipse cx="215" cy="262" rx="35" ry="10" transform="rotate(-18 215 262)"/><ellipse cx="245" cy="305" rx="40" ry="10" transform="rotate(-18 245 305)"/><ellipse cx="262" cy="348" rx="40" ry="10" transform="rotate(-18 262 348)"/></g>
        <path d="M262 425c48 75 103 175 103 305v75M310 410c55 100 100 210 98 330l1 65"/><ellipse cx="387" cy="808" rx="22" ry="12"/>
      </g>
      <g class="triad">
        <path d="m281 966 20-3 1-4 11 5-9 6-1-2-20 3z" fill="#a51c1c"/><path d="m280 966 12-8-1-2 5-3h7l-2 9-7 2-12 7z" fill="#166018"/><path d="m278 970 6-1 7 21 4-1 1 13-10-11 2-1z" fill="#2424cc"/>
        <text x="300" y="955" fill="#178017">Y</text><text x="309" y="966" fill="#d02020">X</text><text x="291" y="1012" fill="#2222b8">Z</text>
      </g>
    </svg>
    <div class="heads">
      <svg><use href="#zoomfit"/></svg><svg><use href="#zoomarea"/></svg><svg><use href="#prev"/></svg><svg><use href="#section"/></svg><svg><use href="#dyn"/></svg><svg><use href="#viewcube"/></svg>
      <svg class="far"><use href="#cube"/></svg>
      <button class="eyebox" aria-label="Hide or show items"><svg><use href="#eye"/></svg><i></i></button>
      <svg><use href="#appear"/></svg><svg><use href="#scene"/></svg><svg class="far"><use href="#monitor"/></svg>
    </div>
    <div class="mdi"><svg><use href="#paneL"/></svg><svg><use href="#paneR"/></svg><svg><use href="#dash"/></svg><svg><use href="#restore"/></svg><svg><use href="#cross"/></svg></div>
    <div class="handle"><i class="knob"></i></div>
    <div class="taskpane">
      <button aria-label="Resources"><svg><use href="#home"/></svg></button>
      <button aria-label="Design library"><svg><use href="#library"/></svg></button>
      <button aria-label="File explorer"><svg><use href="#folder2"/></svg></button>
      <button aria-label="View palette"><svg><use href="#palette"/></svg></button>
      <button aria-label="Appearances"><svg><use href="#sphere"/></svg></button>
      <button aria-label="Custom properties"><svg><use href="#props"/></svg></button>
      <button class="on" aria-label="Forum"><svg><use href="#forum"/></svg></button>
    </div>
  </section>
</main>

<nav class="sheets">
  <div class="nav">
    <button aria-label="First"><svg viewBox="0 0 12 12"><path d="M10 0v12L4 6zM1 0h2v12H1z"/></svg></button>
    <button aria-label="Back"><svg viewBox="0 0 12 12"><path d="M9 0v12L3 6z"/></svg></button>
    <button aria-label="Forward"><svg viewBox="0 0 12 12"><path d="M3 0v12l6-6z"/></svg></button>
    <button aria-label="Last"><svg viewBox="0 0 12 12"><path d="M2 0v12l6-6zM9 0h2v12H9z"/></svg></button>
  </div>
  <button class="on">Model</button><button>3D Views</button><button class="motion">Motion Study 1</button>
</nav>
<footer class="status">
  <span>SOLIDWORKS Premium 2024 SP1.0</span>
  <span class="edit">Editing Part</span><svg class="i18"><use href="#warn"/></svg>
  <span class="units">MMGS</span><i class="up"></i><svg class="i16"><use href="#tag"/></svg>
</footer>
</body>
</html>
```

FILE: styles.css
```css
* { box-sizing: border-box; }
body {
  margin: 0;
  height: 100vh;
  display: flex;
  flex-direction: column;
  overflow: hidden;
  background: #494949;
  color: #f0f0f0;
  font: 14px/20px "Noto Sans", "Open Sans", sans-serif;
}
button { margin: 0; padding: 0; border: 0; background: none; color: inherit; font: inherit; }
button svg, .heads svg, .tree svg { width: 20px; height: 20px; flex: none; }
svg { display: block; }
.sprite { position: absolute; width: 0; height: 0; }
.glyph { font: bold 13px "Liberation Serif", serif; fill: #27708f; }
.i16, button svg.i16 { width: 16px; height: 16px; flex: none; }
.i18 { width: 18px; height: 18px; flex: none; }

/* title bar */
.titlebar {
  display: flex;
  align-items: center;
  height: 40px;
  flex: none;
  border-bottom: 1px solid #c4c4c4;
  background: linear-gradient(90deg, #b9bdbd 809px, #3f84a6 809px 869px, #111 869px 1110px, #b9bdbd 1110px) top / 100% 1px no-repeat, #494949;
  font-size: 13px;
}
.brand { display: flex; align-items: center; gap: 4px; width: 146px; padding-left: 5px; flex: none; font-style: italic; }
.ds { width: 22px; height: 26px; }
.menu { display: flex; gap: 16px; width: 283px; flex: none; }
.menu a { color: inherit; text-decoration: none; padding-top: 3px; }
.pinicon { width: 15px; height: 15px; flex: none; }
.quick { display: flex; align-items: center; height: 38px; margin-left: 4px; padding-left: 22px; border-left: 1px solid #777; flex: none; }
.q { display: flex; align-items: center; width: 33px; height: 34px; padding-left: 3px; }
.q.drop { width: 47px; gap: 10px; }
.q svg { width: 19px; height: 19px; }
.q.drop::after, .caret { content: ""; border: 3px solid transparent; border-top: 4px solid #eee; border-bottom: 0; }
.q.off { width: 44px; }
.q.off::after { border-top-color: #888; }
.q.drop.chosen { margin-left: -3px; margin-right: 5px; padding-left: 6px; border: 1px solid #111; background: linear-gradient(90deg, #282828 31px, #111 31px 32px, #444 32px); }
.doctitle { flex: 1; text-align: center; color: #d4d4d4; padding-right: 1px; }
.search { display: flex; align-items: center; gap: 8px; width: 252px; height: 29px; margin-right: 12px; padding: 0 5px 0 7px; flex: none; background: #fff; }
.term { width: 18px; height: 18px; flex: none; }
.search input { flex: 1; min-width: 0; border: 0; padding: 0; outline: 0; background: none; font: 13px/18px "Noto Sans", sans-serif; }
.search input::placeholder { color: #555; opacity: 1; }
.caret.dark { border-top-color: #666; }
.winctl { display: flex; width: 201px; flex: none; }
.winctl button { display: flex; align-items: center; justify-content: center; width: 41px; height: 30px; padding-right: 14px; }

/* ribbon */
.ribbon { display: flex; height: 82px; flex: none; padding-top: 1px; border-bottom: 1px solid #888; font-size: 13px; line-height: 19px; position: relative; }
.group { display: grid; align-items: start; height: 78px; flex: none; border-right: 1px solid #858585; }
.ribbon .group > button { padding-top: 6px; text-align: center; white-space: nowrap; }
.ribbon .group > button svg { margin: 0 auto; }
.ribbon button:disabled { color: #8b8b8b; }
.ribbon button:disabled svg { filter: grayscale(1); opacity: .35; }
.g3a { grid-template-columns: 108px 96px 85px; }
.g1a { grid-template-columns: 94px; }
.g4 { grid-template-columns: 66px 58px 62px 69px; }
.g1b { grid-template-columns: 124px; }
.g1c { grid-template-columns: 107px; }
.g3b { grid-template-columns: 103px 72px 66px; }
.exports { display: grid; grid-template-columns: 297px 143px; align-content: start; padding-left: 2px; }
.exports > div { display: grid; grid-auto-rows: 26px; }
.exports button { display: flex; align-items: center; gap: 6px; white-space: nowrap; }
.exports svg { width: 20px; height: 20px; }
.fold { position: absolute; right: 8px; bottom: 7px; }
.fold svg { width: 12px; height: 8px; }

/* command tabs */
.tabs {
  display: grid;
  grid-template-columns: 75px 62px 75px 98px 91px 124px 121px 73px 136px 56px 157px 188px 203px;
  align-self: flex-start;
  height: 28px;
  flex: none;
  position: relative;
  z-index: 2;
  border-bottom: 1px solid #888;
  background: #313131;
}
.tabs button { border-right: 1px solid #8a8a8a; white-space: nowrap; }
.tabs .on { background: #494949; font-weight: bold; }

/* workspace */
.work { display: flex; flex: 1; min-height: 0; }
.panel { display: flex; flex-direction: column; width: 231px; flex: none; padding: 0 3px 0 1px; background: linear-gradient(90deg, #aaa 1px, #494949 1px 230px, #888 230px); }
.grip { display: flex; align-items: center; justify-content: center; height: 21px; margin: 4px 0; border: 1px solid #888; border-width: 1px 0; flex: none; }
.knob { width: 8px; height: 8px; border-radius: 50%; background: radial-gradient(#eee 1px, #aaa 3px, #777); }
.ptabs { display: flex; height: 26px; flex: none; border-top: 1px solid #999; }
.ptabs button { display: flex; align-items: center; justify-content: center; width: 40px; overflow: hidden; border: solid #888; border-width: 0 1px 1px 0; background: #303030; }
.ptabs .on { width: 41px; background: #494949; border-bottom: 0; }
.ptabs .cut { width: 22px; justify-content: flex-start; padding-left: 10px; border: 0; }
.ptabs .arrow { flex: 1; background: #eee; border-color: #aaa; margin-top: 1px; }
.left, .right { border: 4px solid transparent; }
.left { border-right: 5px solid #000; border-left: 0; }
.right { border-left: 5px solid #000; border-right: 0; }
.filter { display: flex; align-items: center; height: 32px; flex: none; margin: 0 3px 0 4px; padding-left: 1px; border: 1px solid #888; background: #555; }
.filter svg { width: 19px; height: 19px; }
.filter input { flex: 1; min-width: 0; border: 0; outline: 0; background: none; }
.treebox { display: flex; flex: 1; min-height: 0; }
.tree { flex: 1; min-width: 0; margin: 0; padding: 1px 0 0; list-style: none; overflow: hidden; }
.tree li { display: flex; align-items: center; gap: 4px; height: 24px; padding-left: 25px; white-space: nowrap; overflow: hidden; }
.tree .root { padding-left: 3px; }
.tree .x { padding-left: 9px; }
.tree .x::before { content: ""; width: 12px; height: 8px; background: #fff; clip-path: polygon(0 0, 4px 4px, 0 8px); }
.vbar, .hbar { display: flex; background: #f0f0f0; flex: none; }
.vbar { flex-direction: column; width: 20px; }
.vbar button, .hbar button { display: flex; align-items: center; justify-content: center; width: 20px; height: 21px; background: #f0f0f0; }
.vbar svg, .hbar svg { width: 10px; height: 10px; fill: none; stroke: #555; stroke-width: 2; }
.vbar .thumb { flex: 0 0 28%; background: #cdcdcd; }
.vbar button:last-child { margin-top: auto; }
.hbar { height: 21px; margin-bottom: 5px; padding-right: 20px; }
.hbar .thumb { width: 76px; background: #cdcdcd; }
.hbar button:last-child { margin-left: auto; }

.view {
  position: relative;
  flex: 1;
  min-width: 0;
  margin: -28px 2px 0 0;
  overflow: hidden;
  background: linear-gradient(90deg, #f1f1f1, #e8e8e8 20%, #d2d2d2 38%, #bebebe 55%, #a8a8a8 75%, #909090);
}
.view::before, .view::after { content: ""; position: absolute; inset: 0; }
.view::before {
  background: linear-gradient(90deg, #fcfcfc, #f0f0f0 16%, #d4d4d4 34%, #b8b8b8 51%, #9c9c9c 70%, #7e7e7e);
  mask-image: linear-gradient(#000 62%, transparent);
}
.view::after {
  background: linear-gradient(90deg, #aeaeae, #a4a4a4 22%, #989898 40%, #8e8e8e 50%, #7c7c7c 64%, #5e5e5e);
  mask-image: linear-gradient(#000, transparent 62%);
}
.scene { position: absolute; z-index: 1; inset: 0; width: 100%; }
.wire { fill: none; stroke: #000; stroke-width: 3; shape-rendering: crispEdges; }
.solid { fill: #000; }
.thick { stroke-width: 8; }
.seam { stroke-width: 12; }
.coil { stroke-width: 7; }
.triad text { font: 13px "Liberation Sans", sans-serif; }
.heads { position: absolute; z-index: 1; top: 31px; left: 668px; display: flex; align-items: center; gap: 6px; height: 24px; }
.heads .far { margin: 0 11px 0 14px; }
.eyebox { display: flex; align-items: center; width: 38px; height: 25px; gap: 4px; padding-left: 2px; border: 1px solid #666; background: #888; }
.eyebox i { width: 10px; height: 24px; border: 1px solid #ddd; border-width: 1px 0 0 1px; }
.mdi { position: absolute; z-index: 1; top: 7px; right: 9px; display: flex; gap: 10px; color: #535353; }
.mdi svg { width: 16px; height: 16px; }
.handle { position: absolute; z-index: 1; left: 0; top: 432px; display: flex; align-items: center; justify-content: center; width: 11px; height: 48px; padding-right: 2px; background: #494949; }
.taskpane { position: absolute; z-index: 1; right: -2px; top: 58px; width: 32px; border: solid #888; border-width: 1px 0 0 1px; }
.taskpane button { display: flex; align-items: center; justify-content: center; width: 100%; height: 30px; border-bottom: 1px solid #888; background: #303030; }
.taskpane svg { width: 18px; height: 18px; }
.taskpane .on { background: #b4b4b4; }

/* sheet tabs and status */
.sheets { display: flex; height: 21px; flex: none; border-top: 1px solid #888; border-bottom: 1px solid #888; line-height: 18px; }
.sheets > button { width: 89px; border-right: 1px solid #888; background: #303030; }
.sheets .on { width: 76px; background: #494949; font-weight: bold; }
.sheets .motion { width: 144px; padding-right: 9px; }
.nav { display: flex; gap: 1px; width: 82px; padding-left: 2px; background: #777790; }
.nav button { display: flex; align-items: center; justify-content: center; flex: 1; background: #9c9cb2; }
.nav svg { width: 12px; height: 12px; fill: #77778c; }
.status { display: flex; align-items: center; height: 23px; flex: none; padding: 2px 4px 0 1px; border-bottom: 2px solid #000; }
.edit { margin-left: auto; padding-right: 29px; }
.units { padding: 0 23px 0 80px; }
.up { border: 4px solid transparent; border-bottom-color: #fff; border-top: 0; margin-right: 26px; }
```
